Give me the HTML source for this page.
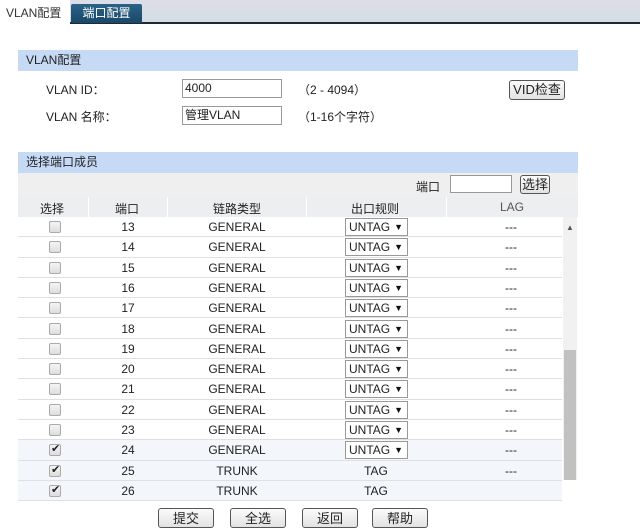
<!DOCTYPE html>
<html><head><meta charset="utf-8"><style>
*{margin:0;padding:0;box-sizing:border-box}
body{width:640px;height:528px;background:#fff;font-family:"Liberation Sans","Noto Sans CJK SC",sans-serif;font-size:12px;color:#222;position:relative;overflow:hidden}
.a{position:absolute}
.bar{left:0;top:0;width:640px;height:23px;background:linear-gradient(#dcdde8,#d4dde4)}
.line{left:70px;top:22px;width:570px;height:2px;background:#1e2a30}
.t1{left:0;top:0;width:70px;height:24px;background:#fff;line-height:26px;padding-left:6px;font-size:12px;color:#333}
.t2{left:71px;top:4px;width:71px;height:19px;background:linear-gradient(#2b6287,#1a4868);color:#fff;line-height:19px;text-align:center;font-size:12px;border-radius:2px 2px 0 0}
.hd{left:18px;width:560px;height:21px;background:#c6daf6;line-height:21px;padding-left:8px;font-size:12px}
.inp{border:1px solid #999;background:#fff;height:19px;line-height:17px;padding-left:2px}
.btn{border:1px solid #555;border-radius:3px;background:linear-gradient(#fbfbfb,#e2e2e2);text-align:center;font-size:13px}
.row{left:18px;width:544px;height:20.3px;border-bottom:1px solid #dde0e4;background:#fff}
.row.b{background:#f3f6fa}
.c{position:absolute;top:0;height:20px;line-height:20px;text-align:center}
.cb{position:absolute;left:31px;top:4px;width:12px;height:12px;border:1px solid #aaa;border-radius:2px;background:linear-gradient(#f4f4f4,#ddd)}
.cb.k::after{content:"✔";position:absolute;left:1px;top:-3px;font-size:11px;color:#222}
.sel{position:absolute;left:327px;top:1px;width:63px;height:18px;border:1px solid #999;background:#fff;line-height:16px;padding-left:3px;font-size:12px}
.sel::after{content:"▼";position:absolute;right:4px;top:0;font-size:9px;color:#111}
</style></head><body>
<div class="a bar"></div><div class="a line"></div>
<div class="a t1">VLAN配置</div>
<div class="a t2">端口配置</div>

<div class="a hd" style="top:50px">VLAN配置</div>
<div class="a" style="left:46px;top:81px">VLAN ID：</div>
<div class="a inp" style="left:182px;top:79px;width:100px">4000</div>
<div class="a" style="left:298px;top:81px">（2 - 4094）</div>
<div class="a btn" style="left:509px;top:80px;width:56px;height:20px;line-height:18px">VID检查</div>
<div class="a" style="left:46px;top:108px">VLAN 名称：</div>
<div class="a inp" style="left:182px;top:106px;width:100px">管理VLAN</div>
<div class="a" style="left:298px;top:108px">（1-16个字符）</div>

<div class="a hd" style="top:152px">选择端口成员</div>
<div class="a" style="left:18px;top:173px;width:560px;height:24px;background:#efefef"></div>
<div class="a" style="left:416px;top:178px">端口</div>
<div class="a inp" style="left:450px;top:175px;width:62px;height:18px"></div>
<div class="a btn" style="left:520px;top:175px;width:30px;height:19px;line-height:17px">选择</div>
<div class="a" style="left:18px;top:197px;width:560px;height:20px;background:#eceef0"></div>
<div class="a" style="left:88px;top:197px;width:1px;height:20px;background:#fff"></div>
<div class="a" style="left:167px;top:197px;width:1px;height:20px;background:#fff"></div>
<div class="a" style="left:306px;top:197px;width:1px;height:20px;background:#fff"></div>
<div class="a" style="left:446px;top:197px;width:1px;height:20px;background:#fff"></div>
<div class="a" style="left:40px;top:200px">选择</div>
<div class="a" style="left:115px;top:200px">端口</div>
<div class="a" style="left:213px;top:200px">链路类型</div>
<div class="a" style="left:351px;top:200px">出口规则</div>
<div class="a" style="left:500px;top:200px;color:#555">LAG</div>

<div id="rows"></div>
<div class="a" style="left:563px;top:217px;width:14px;height:263px;background:#f1f1f1"></div>
<div class="a" style="left:566px;top:223px;font-size:8px;color:#555">▲</div>
<div class="a" style="left:564px;top:350px;width:12px;height:130px;background:#c1c1c1"></div>

<div class="a btn" style="left:158px;top:508px;width:56px;height:20px;line-height:19px">提交</div>
<div class="a btn" style="left:230px;top:508px;width:56px;height:20px;line-height:19px">全选</div>
<div class="a btn" style="left:302px;top:508px;width:56px;height:20px;line-height:19px">返回</div>
<div class="a btn" style="left:372px;top:508px;width:56px;height:20px;line-height:19px">帮助</div>

<script>
var h='';
for(var i=13;i<=26;i++){
 var t=217+(i-13)*20.3;var k=i>=24;var tr=i>=25;
 h+='<div class="a row'+(k?' b':'')+'" style="top:'+t+'px">'+
 '<div class="cb'+(k?' k':'')+'"></div>'+
 '<div class="c" style="left:70px;width:80px">'+i+'</div>'+
 '<div class="c" style="left:149px;width:140px">'+(tr?'TRUNK':'GENERAL')+'</div>'+
 (tr?'<div class="c" style="left:288px;width:140px">TAG</div>':'<div class="sel">UNTAG</div>')+
 (i<26?'<div class="c" style="left:433px;width:120px">---</div>':'')+
 '</div>';
}
document.getElementById('rows').innerHTML=h;
</script>
</body></html>
